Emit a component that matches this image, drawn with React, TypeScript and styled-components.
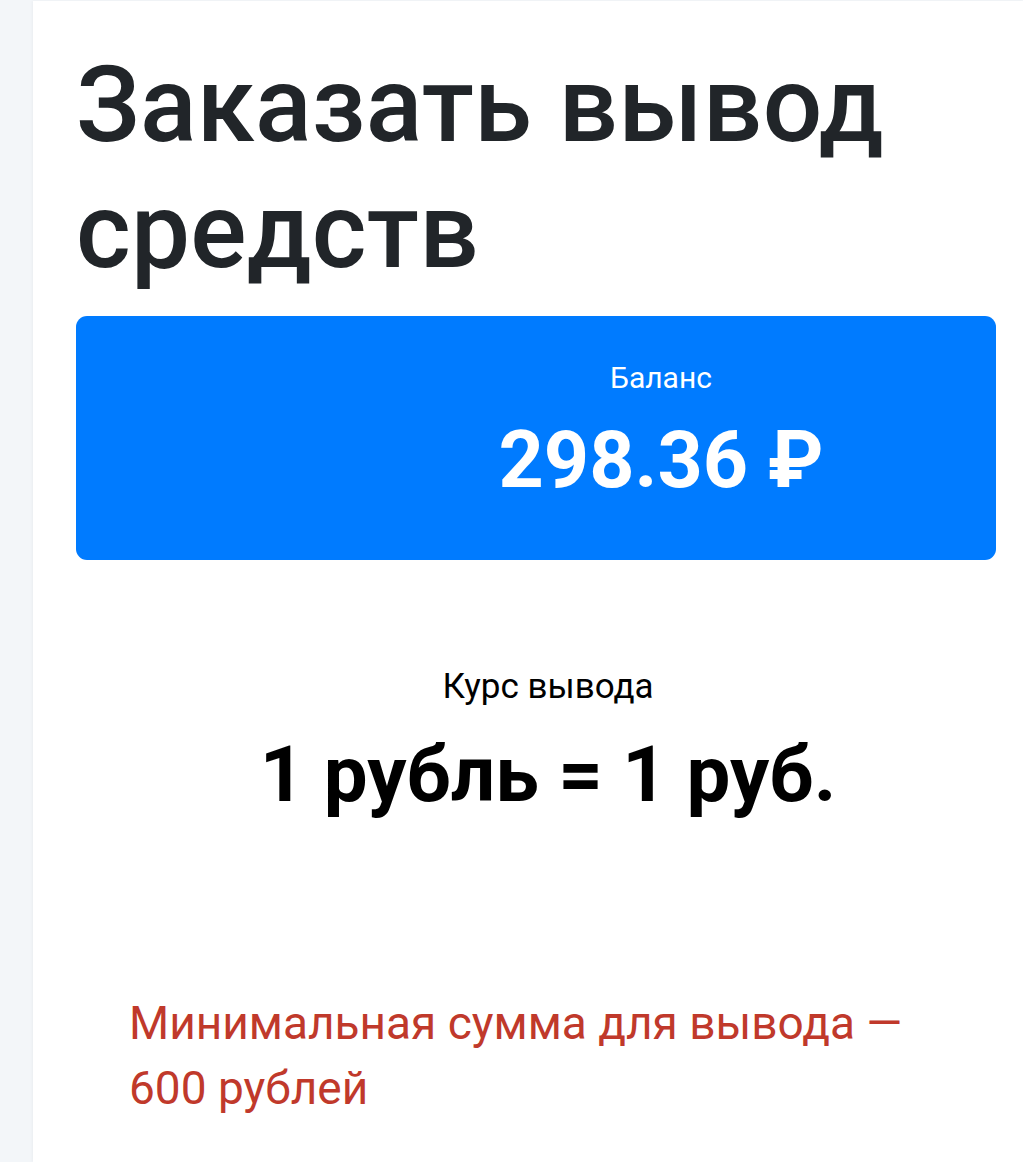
import React from "react";
import styled, { createGlobalStyle } from "styled-components";

const Global = createGlobalStyle`
  html, body {
    margin: 0;
    padding: 0;
    background: #f3f6f9;
    font-family: Roboto, "Noto Sans", "Liberation Sans", sans-serif;
  }
  * { box-sizing: border-box; }
`;

const Page = styled.div`
  display: flex;
  min-height: 1162px;
  padding-left: 33px;
  padding-top: 1px;
`;

const Card = styled.main`
  flex: 1;
  background: #ffffff;
  box-shadow: -1px 0 3px rgba(0, 0, 0, 0.04);
  padding: 42px 3px 40px 43px;
  display: flex;
  flex-direction: column;
`;

const Title = styled.h1`
  margin: 0;
  font-size: 105px;
  line-height: 126px;
  font-weight: 500;
  color: #212529;
  letter-spacing: 0.2px;
`;

const BalanceBox = styled.section`
  margin: 21px 24px 0 0;
  background: #007bff;
  border-radius: 11px;
  display: grid;
  grid-template-columns: 250px 1fr;
  padding: 44px 0 52px;
  color: #ffffff;
`;

const BalanceInfo = styled.div`
  grid-column: 2;
  display: flex;
  flex-direction: column;
  align-items: center;
  gap: 17px;
`;

const Label = styled.div<{ $size: number; $color?: string }>`
  font-size: ${(p) => p.$size}px;
  line-height: 1.2;
  font-weight: 400;
  color: ${(p) => p.$color ?? "inherit"};
`;

const Amount = styled.div<{ $color?: string }>`
  font-size: 79px;
  line-height: 1.2;
  font-weight: 700;
  color: ${(p) => p.$color ?? "inherit"};
`;

const RateBlock = styled.section`
  margin-top: 106px;
  display: flex;
  flex-direction: column;
  align-items: center;
  gap: 20px;
  color: #000000;
`;

const RateValue = styled.div`
  font-size: 78px;
  line-height: 1.2;
  font-weight: 700;
`;

const Notice = styled.p`
  margin: 170px 0 0;
  padding-left: 53px;
  font-size: 46px;
  line-height: 65px;
  color: #c0392b;
`;

export default function App() {
  return (
    <>
      <Global />
      <Page>
        <Card>
          <Title>
            Заказать вывод
            <br />
            средств
          </Title>
          <BalanceBox>
            <BalanceInfo>
              <Label $size={30}>Баланс</Label>
              <Amount>298.36 ₽</Amount>
            </BalanceInfo>
          </BalanceBox>
          <RateBlock>
            <Label $size={35}>Курс вывода</Label>
            <RateValue>1 рубль = 1 руб.</RateValue>
          </RateBlock>
          <Notice>
            Минимальная сумма для вывода —
            <br />
            600 рублей
          </Notice>
        </Card>
      </Page>
    </>
  );
}
